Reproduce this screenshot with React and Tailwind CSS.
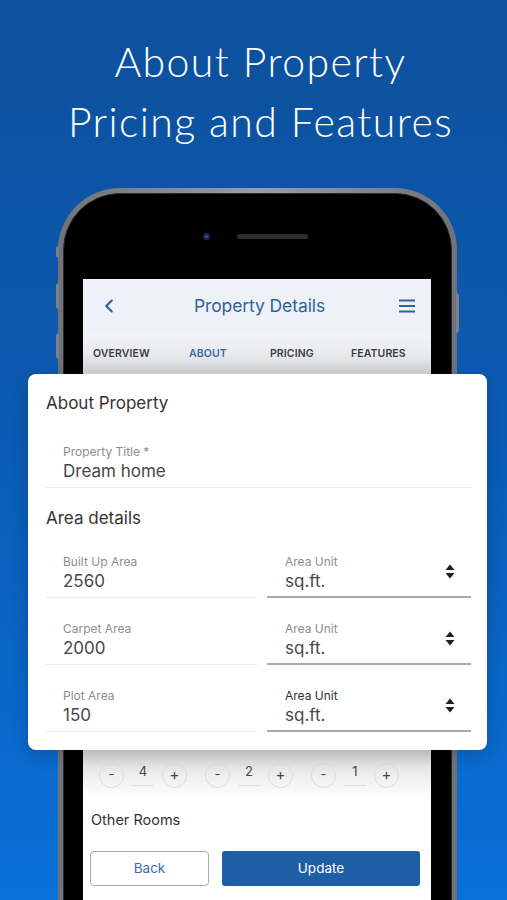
import { ChevronLeft } from "lucide-react";

// ── Small pieces ─────────────────────────────────────────────
function UnitArrows() {
  return (
    <svg width="10" height="15" viewBox="0 0 10 15" className="shrink-0">
      <path d="M5 0.5 L9.5 6 L0.5 6 Z" fill="#1f1f1f" />
      <path d="M5 14.5 L9.5 9 L0.5 9 Z" fill="#1f1f1f" />
    </svg>
  );
}

function TextField({ label, value, className = "" }) {
  return (
    <div className={`border-b border-[#ececec] pl-[17px] pb-[5px] ${className}`}>
      <div className="text-[12px] leading-[16px] text-[#8e8e8e]">{label}</div>
      <div className="text-[17px] leading-[22px] text-[#474747]">{value}</div>
    </div>
  );
}

function UnitField({ dark = false }) {
  return (
    <div className="flex items-start justify-between border-b-2 border-[#a9a9a9] pl-[18px] pr-[16px] pb-[4px]">
      <div>
        <div className={`text-[12px] leading-[16px] ${dark ? "text-[#2f2f2f]" : "text-[#8e8e8e]"}`}>
          Area Unit
        </div>
        <div className="text-[17px] leading-[22px] text-[#474747]">sq.ft.</div>
      </div>
      <div className="pt-[10px]">
        <UnitArrows />
      </div>
    </div>
  );
}

function AreaRow({ label, value, dark, className = "" }) {
  return (
    <div className={`grid grid-cols-[211px_204px] gap-[10px] ${className}`}>
      <TextField label={label} value={value} />
      <UnitField dark={dark} />
    </div>
  );
}

function Stepper({ value }) {
  return (
    <div className="flex items-center gap-[8px]">
      <div className="w-[25px] h-[25px] rounded-full border border-[#dcdcdc] flex items-center justify-center text-[13px] text-[#444]">
        -
      </div>
      <div className="w-[22px] border-b border-[#e2e2e2] pb-[3px] mt-[-2px] text-center text-[13px] text-[#444]">
        {value}
      </div>
      <div className="w-[25px] h-[25px] rounded-full border border-[#dcdcdc] flex items-center justify-center text-[15px] text-[#444]">
        +
      </div>
    </div>
  );
}

// ── Phone mock ───────────────────────────────────────────────
function Phone() {
  return (
    <div className="relative ml-[58px] mt-[36px] w-[399px] h-[720px] rounded-t-[62px] bg-gradient-to-r from-[#6f7379] via-[#9a9ea4] to-[#6f7379] p-[5px]">
      {/* side buttons */}
      <div className="absolute left-[-2px] top-[58px] w-[3px] h-[12px] rounded-l bg-[#7d8187]" />
      <div className="absolute left-[-2px] top-[95px] w-[3px] h-[26px] rounded-l bg-[#7d8187]" />
      <div className="absolute left-[-2px] top-[145px] w-[3px] h-[26px] rounded-l bg-[#7d8187]" />
      <div className="absolute right-[-2px] top-[105px] w-[3px] h-[40px] rounded-r bg-[#7d8187]" />

      <div className="h-full rounded-t-[57px] bg-black border border-[#2b2b2b] px-[19px] flex flex-col">
        <div className="mt-[37px] h-[10px] flex items-center">
          <div className="ml-[120px] w-[7px] h-[7px] rounded-full bg-[#1b2450] flex items-center justify-center">
            <div className="w-[3px] h-[3px] rounded-full bg-[#3c4f9a]" />
          </div>
          <div className="ml-[27px] w-[71px] h-[5px] rounded-full bg-[#2c2c2e]" />
        </div>

        <div className="mt-[38px] w-[348px] flex-1 bg-white flex flex-col">
          {/* nav bar */}
          <div className="h-[54px] bg-[#eef2f8] flex items-center justify-between pl-[15px] pr-[16px]">
            <ChevronLeft className="w-[22px] h-[22px] text-[#2f63a0]" strokeWidth={2.4} />
            <div className="text-[17.5px] text-[#2f63a0] tracking-[-0.1px]">Property Details</div>
            <svg width="16" height="14" viewBox="0 0 16 14">
              <path d="M0 1.5h16M0 7h16M0 12.5h16" stroke="#2f63a0" strokeWidth="2.2" />
            </svg>
          </div>
          {/* tabs */}
          <div className="h-[40px] bg-gradient-to-b from-[#f1f3f6] via-[#eaebee] to-[#d3d4d7] grid grid-cols-[96px_81px_81px_1fr] items-center pl-[10px] text-[10.5px] font-semibold tracking-[0.1px] text-[#3c3c3c]">
            <span className="pt-[2px]">OVERVIEW</span>
            <span className="pt-[2px] text-[#3a6aa8]">ABOUT</span>
            <span className="pt-[2px]">PRICING</span>
            <span className="pt-[2px]">FEATURES</span>
          </div>

          {/* content hidden under the card */}
          <div className="h-[377px] bg-[#d9d9db]" />

          {/* steppers */}
          <div className="h-[50px] bg-gradient-to-b from-[#d4d4d6] via-[#eeeeee] to-white flex items-center pl-[16px] gap-[18px]">
            <Stepper value="4" />
            <Stepper value="2" />
            <Stepper value="1" />
          </div>

          <div className="h-[40px] flex items-center pl-[8px] text-[14.5px] text-[#333]">Other Rooms</div>

          <div className="mt-[11px] flex gap-[13px] pl-[7px]">
            <button className="w-[119px] h-[35px] rounded-[4px] border border-[#a9a9a9] text-[13.5px] text-[#3a6aa8]">
              Back
            </button>
            <button className="w-[198px] h-[35px] rounded-[3px] bg-[#1d5ea7] text-[13.5px] text-white">
              Update
            </button>
          </div>
        </div>
      </div>
    </div>
  );
}

// ── Floating card ────────────────────────────────────────────
function AboutCard() {
  return (
    <div className="absolute left-[28px] top-[374px] w-[459px] h-[376px] rounded-[8px] bg-white shadow-[0_4px_18px_rgba(0,0,0,0.18)] pt-[17px] pl-[18px] pr-[16px]">
      <div className="text-[17px] leading-[24px] text-[#333]">About Property</div>

      <TextField label="Property Title *" value="Dream home" className="mt-[29px]" />

      <div className="mt-[18px] text-[17px] leading-[24px] text-[#333]">Area details</div>

      <AreaRow label="Built Up Area" value="2560" className="mt-[24px]" />
      <AreaRow label="Carpet Area" value="2000" className="mt-[23px]" />
      <AreaRow label="Plot Area" value="150" dark className="mt-[23px]" />
    </div>
  );
}

export default function App() {
  return (
    <div className="relative w-[507px] h-[900px] overflow-hidden bg-gradient-to-b from-[#0d509c] via-[#0b5cb5] to-[#0970da] font-['Inter',sans-serif]">
      <h1 className="pt-[32px] pl-[14px] text-center text-white text-[41px] leading-[60px] font-light font-['Lato',sans-serif] tracking-[1.4px]">
        About Property
        <br />
        Pricing and Features
      </h1>
      <Phone />
      <AboutCard />
    </div>
  );
}
